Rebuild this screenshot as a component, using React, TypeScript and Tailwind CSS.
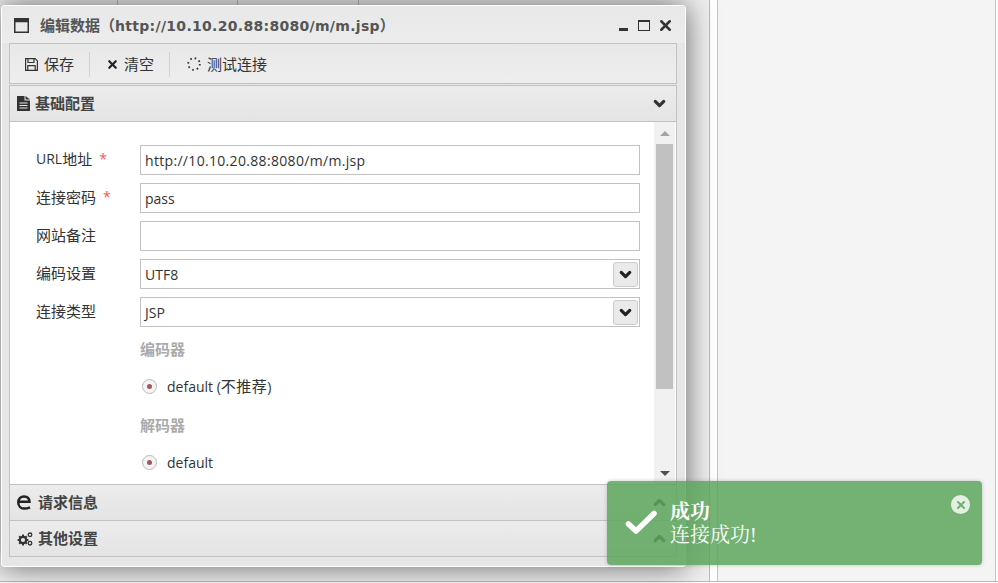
import React from 'react';
import { ChevronDown, ChevronUp, X } from 'lucide-react';

const cjk = 'font-["Open_Sans","Noto_Sans_CJK_SC",sans-serif]';

const FormRow = ({ label, required, value, select, wide }: { label: React.ReactNode; required?: boolean; value?: string; select?: boolean; wide?: boolean }) => (
  <div className="flex h-[38px] items-start">
    <div className="flex w-[130px] pt-[4px] pl-[26px] text-[15px] leading-[20px] text-[#333]">
      {label}
      {required && <span className="ml-[7px] text-[14px] text-[#f55]">*</span>}
    </div>
    <div className={`flex h-[30px] w-[500px] items-center justify-between border border-[#c2c2c2] bg-white pl-1 text-[14px] text-[#333] ${wide ? 'tracking-[0.32px]' : ''}`}>
      <span className="pt-[1px]">{value}</span>
      {select && (
        <span className="mr-[1px] flex h-[25px] w-[25px] items-center justify-center rounded-[3px] border border-[#ccc] bg-[#eaeaea]">
          <ChevronDown size={17} strokeWidth={4.5} className="text-[#222]" />
        </span>
      )}
    </div>
  </div>
);

const Radio = ({ label }: { label: React.ReactNode }) => (
  <div className="flex h-[20px] items-center pl-[130px] text-[14px] text-[#333]">
    <span className="mr-[10px] ml-[2px] flex h-[15px] w-[15px] items-center justify-center rounded-full border border-[#bbb] bg-[#f4f4f4]">
      <span className="h-[5px] w-[5px] rounded-full bg-[#a05a5a]" />
    </span>
    {label}
  </div>
);

const AccordionHead = ({ icon, label, right, h }: { icon: React.ReactNode; label: string; right?: React.ReactNode; h: string }) => (
  <div className={`flex ${h} shrink-0 items-center justify-between bg-gradient-to-b from-[#ececec] to-[#e4e4e4] pr-[8px] pl-[7px] text-[15px] font-bold text-[#444]`}>
    <div className="flex items-center">
      {icon}
      {label}
    </div>
    {right}
  </div>
);

const FileIcon = () => (
  <svg width="13" height="15" viewBox="0 0 13 15" className="mr-[5px] text-[#333]">
    <path fill="currentColor" d="M0 0h7.5v4.5H13V15H0z" />
    <path fill="currentColor" d="M8.5 0 13 3.5H8.5z" />
    <path stroke="#e8e8e8" strokeWidth="1.2" d="M2.5 7h8M2.5 9.5h8M2.5 12h8" />
  </svg>
);

const EdgeIcon = () => (
  <svg width="14" height="15" viewBox="0 0 14 15" className="mr-[7px] text-[#222]">
    <path fill="none" stroke="currentColor" strokeWidth="2.5" d="M1.5 6.8h11C12.4 3.4 10.2 1.4 7 1.4 3.7 1.4 1.3 4 1.3 7.4c0 3.5 2.5 6.2 6.1 6.2 2 0 3.8-.4 5.6-1.3" />
  </svg>
);

const CogsIcon = () => (
  <svg width="16" height="14" viewBox="0 0 16 14" className="mr-[5px] text-[#333]">
    <circle cx="6" cy="8" r="3.2" fill="none" stroke="currentColor" strokeWidth="2.2" />
    <path stroke="currentColor" strokeWidth="2" d="M6 2.6v2M6 11.4v2M.6 8h2M9.4 8h2M2.2 4.2l1.4 1.4M8.4 10.4l1.4 1.4M9.8 4.2 8.4 5.6M3.6 10.4l-1.4 1.4" />
    <circle cx="13" cy="2.8" r="1.8" fill="none" stroke="currentColor" strokeWidth="1.3" />
    <circle cx="13" cy="11.2" r="1.8" fill="none" stroke="currentColor" strokeWidth="1.3" />
  </svg>
);

const SaveIcon = () => (
  <svg width="13" height="13" viewBox="0 0 13 13" className="mr-[6px] text-[#333]">
    <path fill="none" stroke="currentColor" strokeWidth="1.2" d="M.6.6h9.5l2.3 2.3v9.5H.6z" />
    <path fill="none" stroke="currentColor" strokeWidth="1.2" d="M3 .8v3.7h6V.8M2.8 12.2V7.6h7.4v4.6" />
  </svg>
);

export default function App() {
  return (
    <div className={`relative h-[583px] w-[998px] overflow-hidden bg-white ${cjk}`}>
      {/* desktop behind the window */}
      <div className="flex h-[582px] border-b border-[#bbb]">
        <div className="w-[710px] border-r border-[#bbb] bg-[#f0f0f0]">
          <div className="flex h-[5px]">
            <div className="w-[118px] border-r border-[#bbb]" />
            <div className="w-[120px] border-r border-[#bbb]" />
            <div className="w-[121px] border-r border-[#bbb]" />
          </div>
        </div>
        <div className="w-[7px] bg-white" />
        <div className="w-[279px] border-x border-[#c4c4c4] bg-[#f4f4f4]" />
      </div>

      {/* window */}
      <div className="absolute top-[5px] left-[1px] flex h-[562px] w-[685px] flex-col rounded-[3px] border border-white bg-[#e6e6e6] shadow-[0_0_30px_rgba(0,0,0,0.6)]">
        <div className="flex h-[37px] shrink-0 items-center justify-between bg-gradient-to-b from-[#e8e8e8] to-[#ececec] pt-[1px] pr-[11px] pl-[12px]">
          <div className="flex items-center gap-[11px] text-[15px] font-bold text-[#555]">
            <svg width="15" height="15" viewBox="0 0 15 15" className="text-[#333]">
              <rect x="0.75" y="0.75" width="13.5" height="13.5" fill="none" stroke="currentColor" strokeWidth="1.5" />
              <rect x="0.75" y="0.75" width="13.5" height="3.5" fill="currentColor" />
            </svg>
            <span>编辑数据（<span className="font-['DejaVu_Sans'] text-[14px] tracking-[0.3px]">http://10.10.20.88:8080/m/m.jsp</span>）</span>
          </div>
          <div className="flex items-center text-[#333]">
            <span className="mt-[8px] h-[3px] w-[9px] bg-[#333]" />
            <span className="ml-[10px] h-[11px] w-[12px] border-[1.5px] border-t-[2.5px] border-[#333]" />
            <X size={17} strokeWidth={3.5} className="ml-[7px]" />
          </div>
        </div>

        <div className="mr-[8px] ml-[7px] flex flex-col">
          <div className="flex h-[41px] items-center border border-[#c2c2c2] bg-gradient-to-b from-[#e8e8e8] to-[#eeeeee] pt-[1px] pl-[15px] text-[15px] text-[#333]">
            <SaveIcon />
            保存
            <span className="mx-[15px] h-[25px] w-[1px] bg-[#d0d4d8]" />
            <X size={13} strokeWidth={4} className="mr-[5px] ml-[1px] text-[#222]" />
            清空
            <span className="mx-[15px] h-[25px] w-[1px] bg-[#d0d4d8]" />
            <svg width="14" height="14" viewBox="0 0 14 14" className="mr-[6px] ml-[2px] text-[#333]">
              <circle cx="7" cy="7" r="5.8" fill="none" stroke="currentColor" strokeWidth="1.8" strokeDasharray="1.6 2.95" />
            </svg>
            测试连接
          </div>

          <div className="mt-[1px] flex h-[472px] flex-col border border-[#c2c2c2]">
            <AccordionHead
              h="h-[35px]"
              icon={<FileIcon />}
              label="基础配置"
              right={<ChevronDown size={17} strokeWidth={4.5} className="text-[#333]" />}
            />
            <div className="flex min-h-0 flex-1 border-y border-[#c2c2c2] bg-white pr-[1px]">
              <div className="flex-1 overflow-hidden pt-[23px]">
                <FormRow label={<><span className="text-[14px]">URL</span>地址</>} required value="http://10.10.20.88:8080/m/m.jsp" wide />
                <FormRow label="连接密码" required value="pass" />
                <FormRow label="网站备注" />
                <FormRow label="编码设置" value="UTF8" select />
                <FormRow label="连接类型" value="JSP" select />
                <div className="pt-[4px] pl-[130px] text-[15px] leading-[20px] font-bold text-[#aaa]">编码器</div>
                <div className="mt-[17px]"><Radio label={<span>default (<span className="text-[15px] tracking-[0.5px]">不推荐</span>)</span>} /></div>
                <div className="mt-[19px] pl-[130px] text-[15px] leading-[20px] font-bold text-[#aaa]">解码器</div>
                <div className="mt-[17px]"><Radio label="default" /></div>
              </div>
              <div className="flex w-[21px] flex-col items-center bg-[#f1f1f1]">
                <div className="flex h-[22px] items-center justify-center">
                  <span className="h-0 w-0 border-x-[5px] border-b-[5px] border-x-transparent border-b-[#a3a3a3]" />
                </div>
                <div className="h-[245px] w-[17px] bg-[#c1c1c1]" />
                <div className="flex-1" />
                <div className="flex h-[21px] items-center justify-center">
                  <span className="h-0 w-0 border-x-[5px] border-t-[5px] border-x-transparent border-t-[#505050]" />
                </div>
              </div>
            </div>
            <AccordionHead
              h="h-[35px]"
              icon={<EdgeIcon />}
              label="请求信息"
              right={<ChevronUp size={17} strokeWidth={4.5} className="text-[#333]" />}
            />
            <div className="h-[1px] shrink-0 bg-[#c2c2c2]" />
            <AccordionHead
              h="h-[35px]"
              icon={<CogsIcon />}
              label="其他设置"
              right={<ChevronUp size={17} strokeWidth={4.5} className="text-[#333]" />}
            />
          </div>
        </div>
      </div>

      {/* toast */}
      <div className="absolute top-[481px] left-[607px] flex h-[84px] w-[375px] rounded-[4px] bg-[#5ca65c]/85 text-white shadow-[0_0_4px_rgba(0,0,0,0.2)]">
        <svg width="34" height="28" viewBox="0 0 34 28" className="mt-[28px] ml-[17px]">
          <path fill="none" stroke="currentColor" strokeWidth="5.5" strokeLinecap="round" strokeLinejoin="round" d="M4.5 15 12 22 30 4.5" />
        </svg>
        <div className="mt-[20px] ml-[12px] font-['Liberation_Serif','Noto_Serif_CJK_SC','Noto_Sans_CJK_SC',serif] text-[20px] leading-[23px]">
          <div className="font-bold">成功</div>
          <div>连接成功!</div>
        </div>
        <span className="absolute top-[14px] right-[12px] flex h-[19px] w-[19px] items-center justify-center rounded-full bg-[#e2efe2] text-[#6fb16f]">
          <X size={12} strokeWidth={4} />
        </span>
      </div>
    </div>
  );
}
